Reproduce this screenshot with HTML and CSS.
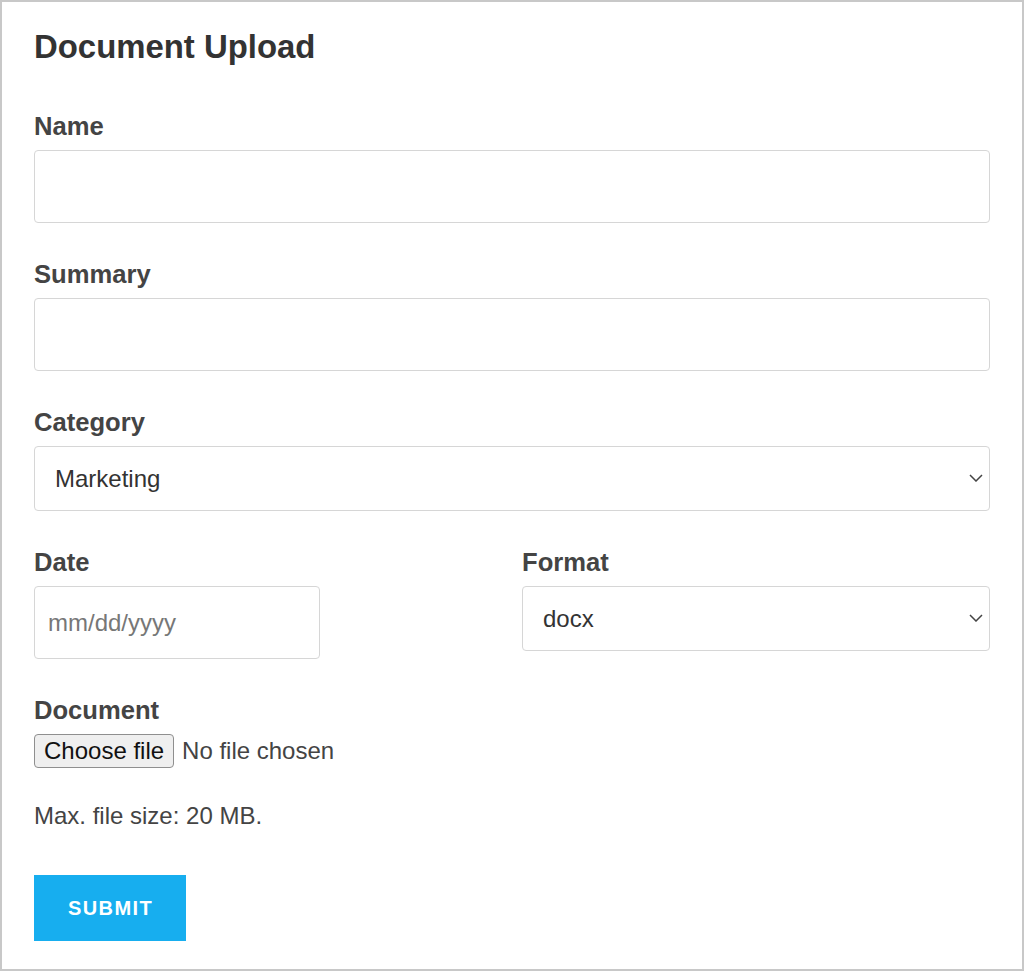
FILE: index.html
```html
<!DOCTYPE html>
<html lang="en">
<head>
  <meta charset="UTF-8">
  <meta name="viewport" content="width=device-width, initial-scale=1.0">
  <title>Document Upload</title>
  <link rel="stylesheet" href="styles.css">
</head>
<body>

  <!-- Upload form card -->
  <div class="card">
    <h1>Document Upload</h1>
    <form id="uploadForm">
      <div class="field">
        <label for="name">Name</label>
        <input type="text" id="name" class="text-input">
      </div>

      <div class="field">
        <label for="summary">Summary</label>
        <input type="text" id="summary" class="text-input">
      </div>

      <div class="field">
        <label for="category">Category</label>
        <div class="select-wrap">
          <select id="category">
            <option>Marketing</option>
            <option>Sales</option>
            <option>Finance</option>
            <option>Legal</option>
          </select>
          <svg class="chevron" width="14" height="8" viewBox="0 0 14 8"><path d="M1 1l6 6 6-6" fill="none" stroke="#444" stroke-width="1.5"/></svg>
        </div>
      </div>

      <div class="field-row">
        <div class="field">
          <label for="date">Date</label>
          <input type="text" id="date" class="text-input date-input" placeholder="mm/dd/yyyy">
        </div>
        <div class="field">
          <label for="format">Format</label>
          <div class="select-wrap">
            <select id="format">
              <option>docx</option>
              <option>pdf</option>
              <option>txt</option>
            </select>
            <svg class="chevron" width="14" height="8" viewBox="0 0 14 8"><path d="M1 1l6 6 6-6" fill="none" stroke="#444" stroke-width="1.5"/></svg>
          </div>
        </div>
      </div>

      <div class="field file-field">
        <label for="document">Document</label>
        <div class="file-picker">
          <input type="file" id="document" class="file-native">
          <label for="document" class="file-btn">Choose file</label>
          <span class="file-name" id="fileName">No file chosen</span>
        </div>
        <p class="hint">Max. file size: 20 MB.</p>
      </div>

      <button type="submit" class="submit-btn">Submit</button>
    </form>
  </div>

  <script>
    // Show the picked file name next to the button
    document.getElementById("document").addEventListener("change", function() {
      const file = this.files[0];
      document.getElementById("fileName").textContent = file ? file.name : "No file chosen";
    });
  </script>
</body>
</html>
```

FILE: styles.css
```css
/* Basic styling */
* {
  box-sizing: border-box;
}
body {
  font-family: "Liberation Sans", Arial, sans-serif;
  background-color: #ffffff;
  color: #444444;
  margin: 0;
}
.card {
  height: 100vh;
  border: 2px solid #c8c8c8;
  padding: 25px 32px 32px;
}
h1 {
  font-size: 32.9px;
  line-height: 40px;
  margin: 0 0 44px;
  color: #333333;
}

/* Fields */
.field {
  margin-bottom: 36px;
}
.field > label {
  display: block;
  font-size: 25.6px;
  font-weight: bold;
  line-height: 30px;
  margin-bottom: 9px;
  color: #444444;
}
.text-input {
  display: block;
  width: 100%;
  height: 73px;
  padding: 0 13px;
  font-family: inherit;
  font-size: 24px;
  color: #333333;
  border: 1px solid #d6d6d6;
  border-radius: 4px;
  background: #ffffff;
}
.text-input::placeholder {
  color: #777777;
}
.date-input {
  width: 286px;
}
.field-row {
  display: grid;
  grid-template-columns: 1fr 1fr;
  column-gap: 20px;
}

/* Select with custom chevron */
.select-wrap {
  position: relative;
}
.select-wrap select {
  display: block;
  width: 100%;
  height: 65px;
  padding: 0 40px 0 20px;
  font-family: inherit;
  font-size: 24px;
  color: #333333;
  border: 1px solid #d6d6d6;
  border-radius: 4px;
  background: #ffffff;
  appearance: none;
  -webkit-appearance: none;
}
.chevron {
  position: absolute;
  right: 7px;
  top: 28px;
  pointer-events: none;
}

/* File picker */
.file-native {
  display: none;
}
.file-picker {
  display: flex;
  align-items: center;
  margin-top: 4px;
}
.file-btn {
  display: inline-block;
  font-size: 24px;
  line-height: 28px;
  padding: 2px 9px;
  color: #111111;
  background: #efefef;
  border: 1px solid #8f8f8f;
  border-radius: 4px;
  cursor: pointer;
}
.file-name {
  margin-left: 8px;
  font-size: 24px;
  color: #444444;
}
.hint {
  font-size: 24px;
  line-height: 28px;
  margin: 34px 0 0;
  color: #444444;
}
.file-field {
  margin-bottom: 45px;
}

/* Submit */
.submit-btn {
  display: block;
  padding: 21px 33px 21px 34px;
  font-family: inherit;
  font-size: 20px;
  line-height: 24px;
  font-weight: bold;
  letter-spacing: 1.4px;
  text-transform: uppercase;
  color: #ffffff;
  background-color: #17aeef;
  border: none;
  border-radius: 0;
  cursor: pointer;
}
```
